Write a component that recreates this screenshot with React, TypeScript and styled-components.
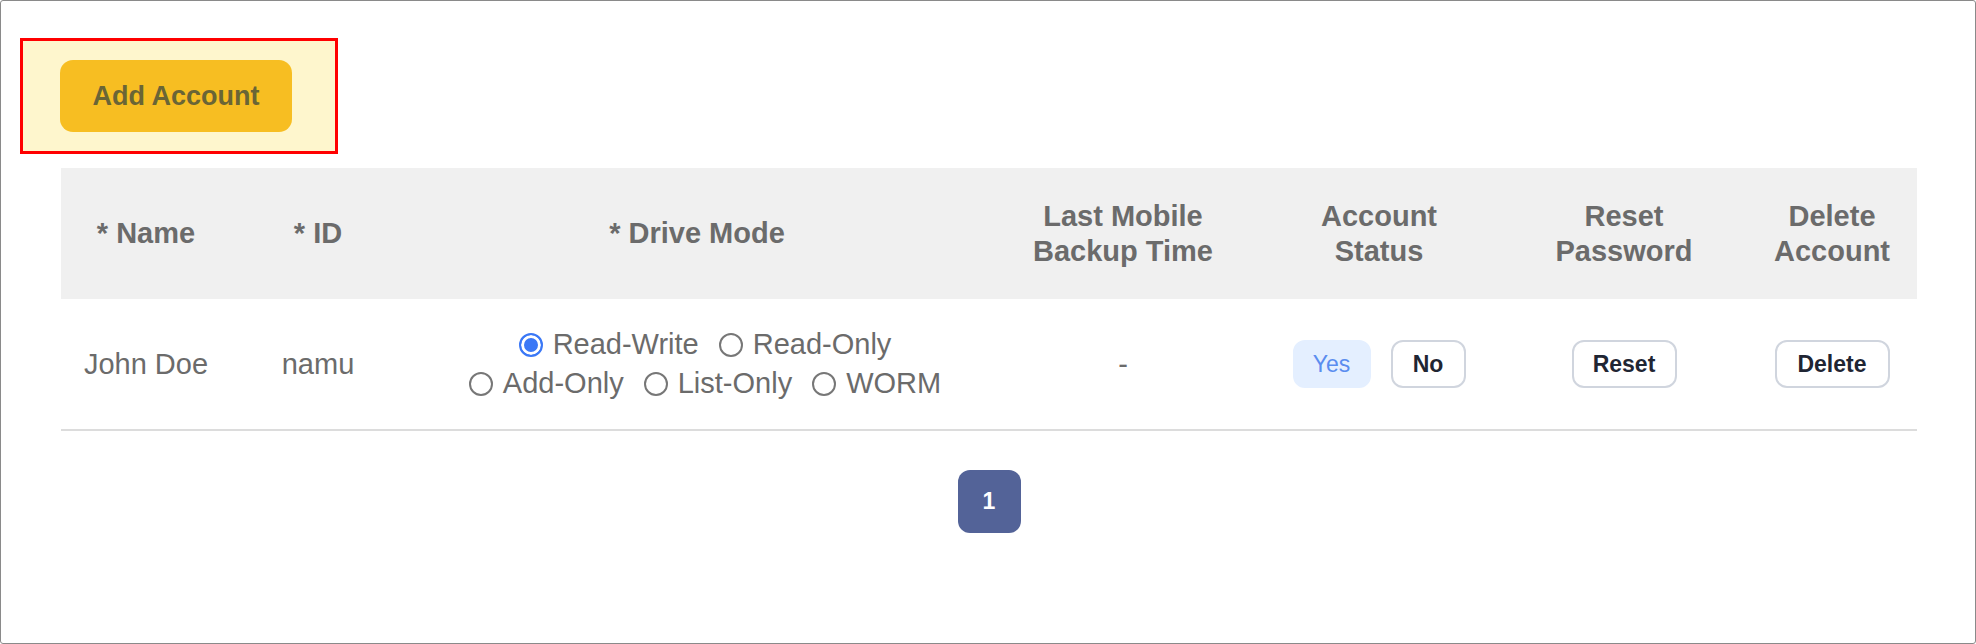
import { useState } from "react";
import styled, { createGlobalStyle } from "styled-components";

type Account = {
  name: string;
  id: string;
  mode: string;
  lastBackup: string;
  active: boolean;
};

const modes = [["Read-Write", "Read-Only"], ["Add-Only", "List-Only", "WORM"]];

const initialAccounts: Account[] = [
  { name: "John Doe", id: "namu", mode: "Read-Write", lastBackup: "-", active: true },
];

const columns = [
  "* Name",
  "* ID",
  "* Drive Mode",
  "Last Mobile\nBackup Time",
  "Account\nStatus",
  "Reset\nPassword",
  "Delete\nAccount",
];

const GlobalStyle = createGlobalStyle`
  html, body {
    margin: 0;
    padding: 0;
    background: #fff;
    font-family: "Liberation Sans", Arial, sans-serif;
  }
`;

const Frame = styled.div`
  box-sizing: border-box;
  width: 1976px;
  height: 644px;
  border: 1px solid #8a8a8a;
  border-radius: 3px;
  padding: 37px 59px 0 19px;
  background: #fff;
`;

const Toolbar = styled.div`
  display: inline-flex;
  box-sizing: border-box;
  width: 318px;
  padding: 19px 43px 19px 37px;
  border: 3px solid #ff0000;
  background: #fef6cd;
`;

const AddButton = styled.button`
  width: 232px;
  height: 72px;
  border: none;
  border-radius: 13px;
  background: #f7be22;
  color: #6a6536;
  font-family: "Liberation Sans", Arial, sans-serif;
  font-weight: 700;
  font-size: 27px;
  cursor: pointer;
`;

const Table = styled.div`
  display: grid;
  grid-template-columns: 170px 174px 584px 268px 244px 246px 170px;
  margin: 14px 0 0 41px;
  width: 1856px;
`;

const HeadCell = styled.div`
  display: flex;
  align-items: center;
  justify-content: center;
  height: 131px;
  background: #f0f0f0;
  color: #6b6b6b;
  font-weight: 700;
  font-size: 29px;
  line-height: 35px;
  text-align: center;
  white-space: pre-line;
`;

const Cell = styled.div`
  display: flex;
  align-items: center;
  justify-content: center;
  height: 130px;
  border-bottom: 2px solid #dcdcdc;
  color: #6b6b6b;
  font-size: 29px;
  text-align: center;
`;

const RadioGroup = styled.div`
  display: flex;
  flex-direction: column;
  align-items: center;
  padding-left: 16px;
`;

const RadioLine = styled.div`
  display: flex;
  gap: 20px;
  height: 39px;
  align-items: center;
`;

const RadioLabel = styled.label`
  display: flex;
  align-items: center;
  gap: 10px;
  font-size: 29px;
  color: #6b6b6b;
  cursor: pointer;
`;

const Radio = styled.input`
  appearance: none;
  box-sizing: border-box;
  width: 24px;
  height: 24px;
  margin: 0;
  border: 2px solid #777;
  border-radius: 50%;
  background: #fff;

  &:checked {
    border-color: #3b78f6;
    background: #3b78f6;
    box-shadow: inset 0 0 0 3px #fff;
  }
`;

const ButtonPair = styled.div`
  display: flex;
  gap: 20px;
`;

const SmallButton = styled.button<{ $active?: boolean; $w: number }>`
  box-sizing: border-box;
  width: ${(p) => p.$w}px;
  height: 48px;
  border-radius: 12px;
  border: 2px solid ${(p) => (p.$active ? "#e4efff" : "#d0d5de")};
  background: ${(p) => (p.$active ? "#e4efff" : "#fff")};
  color: ${(p) => (p.$active ? "#5b8def" : "#1f2533")};
  font-family: "Liberation Sans", Arial, sans-serif;
  font-weight: ${(p) => (p.$active ? 400 : 700)};
  font-size: 23px;
  cursor: pointer;
`;

const Pager = styled.div`
  display: flex;
  justify-content: center;
  margin: 39px 0 0 41px;
  width: 1856px;
`;

const PageButton = styled.button`
  width: 63px;
  height: 63px;
  border: none;
  border-radius: 12px;
  background: #536398;
  color: #fff;
  font-family: "Liberation Sans", Arial, sans-serif;
  font-weight: 700;
  font-size: 23px;
`;

export default function App() {
  const [accounts, setAccounts] = useState(initialAccounts);

  const update = (idx: number, patch: Partial<Account>) =>
    setAccounts(accounts.map((a, i) => (i === idx ? { ...a, ...patch } : a)));

  return (
    <>
      <GlobalStyle />
      <Frame>
        <Toolbar>
          <AddButton>Add Account</AddButton>
        </Toolbar>

        <Table>
          {columns.map((c) => (
            <HeadCell key={c}>{c}</HeadCell>
          ))}

          {accounts.map((acc, idx) => [
            <Cell key="name">{acc.name}</Cell>,
            <Cell key="id">{acc.id}</Cell>,
            <Cell key="mode">
              <RadioGroup>
                {modes.map((line, li) => (
                  <RadioLine key={li}>
                    {line.map((m) => (
                      <RadioLabel key={m}>
                        <Radio
                          type="radio"
                          name={`mode-${idx}`}
                          checked={acc.mode === m}
                          onChange={() => update(idx, { mode: m })}
                        />
                        {m}
                      </RadioLabel>
                    ))}
                  </RadioLine>
                ))}
              </RadioGroup>
            </Cell>,
            <Cell key="backup">{acc.lastBackup}</Cell>,
            <Cell key="status">
              <ButtonPair>
                <SmallButton $w={78} $active={acc.active} onClick={() => update(idx, { active: true })}>
                  Yes
                </SmallButton>
                <SmallButton $w={75} $active={!acc.active} onClick={() => update(idx, { active: false })}>
                  No
                </SmallButton>
              </ButtonPair>
            </Cell>,
            <Cell key="reset">
              <SmallButton $w={105}>Reset</SmallButton>
            </Cell>,
            <Cell key="delete">
              <SmallButton $w={115}>Delete</SmallButton>
            </Cell>,
          ])}
        </Table>

        <Pager>
          <PageButton>1</PageButton>
        </Pager>
      </Frame>
    </>
  );
}
